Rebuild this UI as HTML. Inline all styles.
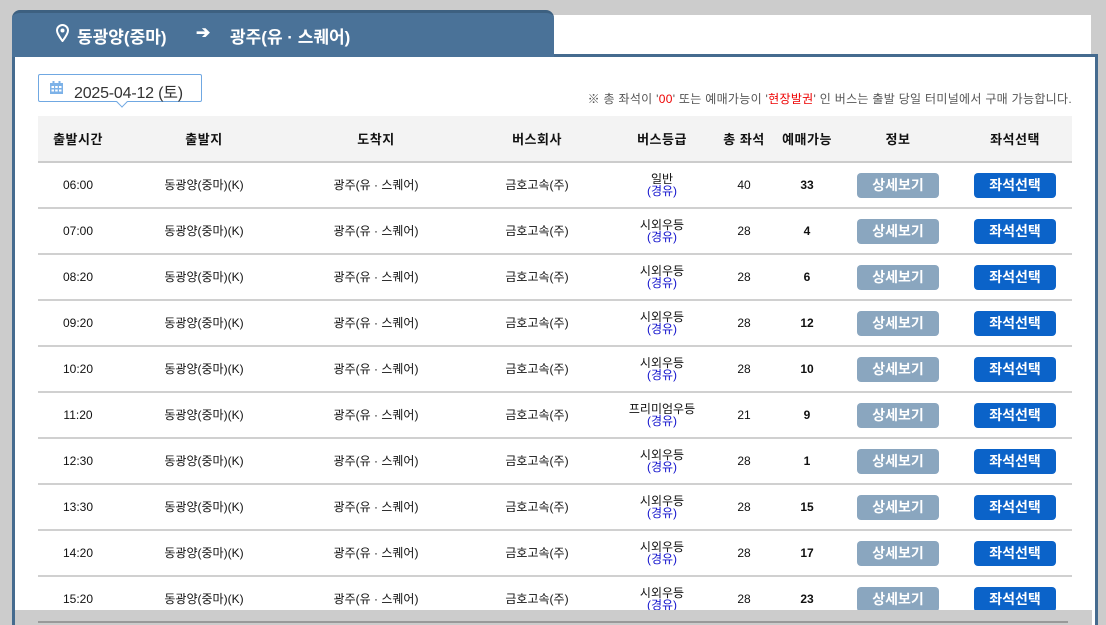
<!DOCTYPE html>
<html><head><meta charset="utf-8"><style>
*{margin:0;padding:0;box-sizing:border-box}
html,body{width:1106px;height:625px;overflow:hidden}
body{background:#cccccc;position:relative;font-family:"Liberation Sans","Noto Sans CJK KR","NanumGothic",sans-serif;}
.white-top{position:absolute;left:553px;top:15px;width:538px;height:40px;background:#fff}
.box{position:absolute;left:12px;top:54px;width:1086px;height:580px;border:3px solid #456b8f;background:#fff}
.tab{position:absolute;left:12px;top:10px;width:542px;height:47px;background:#4a7298;border-radius:8px 8px 0 0;border-top:3px solid #3d6080;color:#fff;font-size:17px;font-weight:bold}
.tab span{position:absolute;top:10px}
.date{position:absolute;left:38px;top:74px;width:164px;height:28px;border:1px solid #70a8e2;border-radius:2px;background:#fff;font-size:16px;color:#333}
.date .t{position:absolute;left:35px;top:4px;letter-spacing:-0.2px}
.date:after{content:"";position:absolute;left:79px;bottom:-5px;width:7px;height:7px;background:#fff;border-right:1px solid #70a8e2;border-bottom:1px solid #70a8e2;transform:rotate(45deg)}
.note{position:absolute;right:34px;top:90px;font-size:12px;color:#555;letter-spacing:0.3px}
.note b{font-weight:normal;color:#e00}
table{position:absolute;left:38px;top:116px;width:1034px;border-collapse:collapse;font-size:12px;color:#111}
th{height:46px;background:#f3f3f3;font-size:13px;font-weight:bold;border-bottom:2px solid #ccc;text-align:center;letter-spacing:0.5px}
td{height:46px;border-bottom:2px solid #d0d0d0;text-align:center;line-height:12px}
.g{color:#11c;}
.btn{display:inline-block;width:82px;height:25px;line-height:25px;border-radius:4px;color:#fff;font-size:14px;font-weight:bold}
.b1{background:#8aa6bf}.b2{background:#0b63c9}
.bot{position:absolute;left:15px;top:610px;width:1077px;height:15px;background:#cccccc}
.bot:after{content:"";position:absolute;left:23px;right:24px;top:11px;height:2px;background:#999}
</style></head><body>
<div class="white-top"></div>
<div class="box"></div>
<div class="tab">
<svg style="position:absolute;left:44px;top:11px" width="13" height="18" viewBox="0 0 13 18"><path d="M6.5 1A5.5 5.5 0 0 0 1 6.5C1 10 6.5 17 6.5 17S12 10 12 6.5A5.5 5.5 0 0 0 6.5 1z" fill="none" stroke="#fff" stroke-width="2"/><circle cx="6.5" cy="6.5" r="2" fill="#fff"/></svg>
<span style="left:65px">동광양(중마)</span>
<span style="left:184px">➔</span>
<span style="left:218px">광주(유 · 스퀘어)</span>
</div>
<div class="date">
<svg style="position:absolute;left:11px;top:6px" width="13" height="13" viewBox="0 0 13 13"><rect x="0" y="2" width="13" height="11" fill="#7db2e8"/><g fill="#fff"><rect x="1.5" y="5" width="2.5" height="2"/><rect x="5.2" y="5" width="2.5" height="2"/><rect x="9" y="5" width="2.5" height="2"/><rect x="1.5" y="8.5" width="2.5" height="2"/><rect x="5.2" y="8.5" width="2.5" height="2"/><rect x="9" y="8.5" width="2.5" height="2"/></g><rect x="2.5" y="0" width="2" height="3" fill="#7db2e8"/><rect x="8.5" y="0" width="2" height="3" fill="#7db2e8"/></svg>
<span class="t">2025-04-12 (토)</span></div>
<div class="note">※ 총 좌석이 '<b>00</b>' 또는 예매가능이 '<b>현장발권</b>' 인 버스는 출발 당일 터미널에서 구매 가능합니다.</div>
<table>
<colgroup><col style="width:80px"><col style="width:172px"><col style="width:172px"><col style="width:150px"><col style="width:100px"><col style="width:64px"><col style="width:62px"><col style="width:120px"><col style="width:114px"></colgroup>
<tr><th>출발시간</th><th>출발지</th><th>도착지</th><th>버스회사</th><th>버스등급</th><th>총 좌석</th><th>예매가능</th><th>정보</th><th>좌석선택</th></tr>
<tr><td>06:00</td><td>동광양(중마)(K)</td><td>광주(유 · 스퀘어)</td><td>금호고속(주)</td><td>일반<br><span class="g">(경유)</span></td><td>40</td><td><b>33</b></td><td><span class="btn b1">상세보기</span></td><td><span class="btn b2">좌석선택</span></td></tr>
<tr><td>07:00</td><td>동광양(중마)(K)</td><td>광주(유 · 스퀘어)</td><td>금호고속(주)</td><td>시외우등<br><span class="g">(경유)</span></td><td>28</td><td><b>4</b></td><td><span class="btn b1">상세보기</span></td><td><span class="btn b2">좌석선택</span></td></tr>
<tr><td>08:20</td><td>동광양(중마)(K)</td><td>광주(유 · 스퀘어)</td><td>금호고속(주)</td><td>시외우등<br><span class="g">(경유)</span></td><td>28</td><td><b>6</b></td><td><span class="btn b1">상세보기</span></td><td><span class="btn b2">좌석선택</span></td></tr>
<tr><td>09:20</td><td>동광양(중마)(K)</td><td>광주(유 · 스퀘어)</td><td>금호고속(주)</td><td>시외우등<br><span class="g">(경유)</span></td><td>28</td><td><b>12</b></td><td><span class="btn b1">상세보기</span></td><td><span class="btn b2">좌석선택</span></td></tr>
<tr><td>10:20</td><td>동광양(중마)(K)</td><td>광주(유 · 스퀘어)</td><td>금호고속(주)</td><td>시외우등<br><span class="g">(경유)</span></td><td>28</td><td><b>10</b></td><td><span class="btn b1">상세보기</span></td><td><span class="btn b2">좌석선택</span></td></tr>
<tr><td>11:20</td><td>동광양(중마)(K)</td><td>광주(유 · 스퀘어)</td><td>금호고속(주)</td><td>프리미엄우등<br><span class="g">(경유)</span></td><td>21</td><td><b>9</b></td><td><span class="btn b1">상세보기</span></td><td><span class="btn b2">좌석선택</span></td></tr>
<tr><td>12:30</td><td>동광양(중마)(K)</td><td>광주(유 · 스퀘어)</td><td>금호고속(주)</td><td>시외우등<br><span class="g">(경유)</span></td><td>28</td><td><b>1</b></td><td><span class="btn b1">상세보기</span></td><td><span class="btn b2">좌석선택</span></td></tr>
<tr><td>13:30</td><td>동광양(중마)(K)</td><td>광주(유 · 스퀘어)</td><td>금호고속(주)</td><td>시외우등<br><span class="g">(경유)</span></td><td>28</td><td><b>15</b></td><td><span class="btn b1">상세보기</span></td><td><span class="btn b2">좌석선택</span></td></tr>
<tr><td>14:20</td><td>동광양(중마)(K)</td><td>광주(유 · 스퀘어)</td><td>금호고속(주)</td><td>시외우등<br><span class="g">(경유)</span></td><td>28</td><td><b>17</b></td><td><span class="btn b1">상세보기</span></td><td><span class="btn b2">좌석선택</span></td></tr>
<tr><td>15:20</td><td>동광양(중마)(K)</td><td>광주(유 · 스퀘어)</td><td>금호고속(주)</td><td>시외우등<br><span class="g">(경유)</span></td><td>28</td><td><b>23</b></td><td><span class="btn b1">상세보기</span></td><td><span class="btn b2">좌석선택</span></td></tr>
</table>
<div class="bot"></div>
</body></html>
